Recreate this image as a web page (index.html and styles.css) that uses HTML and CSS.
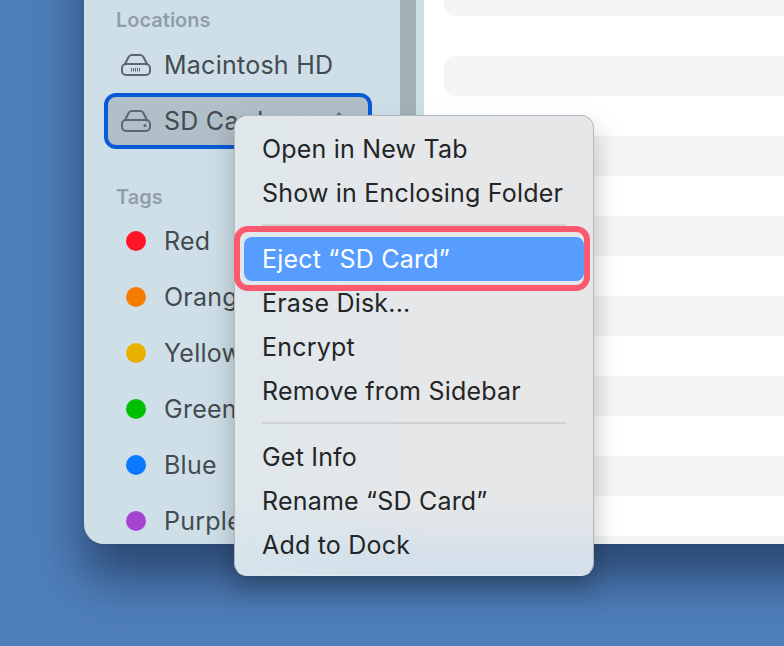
FILE: index.html
```html
<!DOCTYPE html>
<html lang="en">
<head>
    <meta charset="UTF-8">
    <title>Eject SD Card</title>
    <link rel="stylesheet" href="styles.css">
</head>
<body>

<div class="window-shadow"></div>
<div class="window">
    <aside class="sidebar">
        <div class="sidebar-list">
            <h2 class="sidebar-title">Locations</h2>
            <div class="row">
                <svg class="drive" viewBox="0 0 30 22" width="30" height="22">
                    <path d="M3.5 11 L7.6 3 Q8.6 1 11 1 H19 Q21.4 1 22.4 3 L26.5 11"/>
                    <rect x="1" y="10" width="28" height="11" rx="4"/>
                    <path class="grille" d="M10.5 14v3.5M12.5 14v3.5M14.5 14v3.5M16.5 14v3.5M18.5 14v3.5"/>
                </svg>
                <span>Macintosh HD</span>
            </div>
            <div class="row selected">
                <svg class="drive" viewBox="0 0 30 22" width="30" height="22">
                    <path d="M3.5 11 L7.6 3 Q8.6 1 11 1 H19 Q21.4 1 22.4 3 L26.5 11"/>
                    <rect x="1" y="10" width="28" height="11" rx="4"/>
                    <circle class="led" cx="24" cy="15.5" r="1.6"/>
                </svg>
                <span>SD Card</span>
                <svg class="eject" viewBox="0 0 14 16" width="14" height="16">
                    <path d="M7 0 L13 6 H1 Z"/>
                    <rect x="1" y="8" width="12" height="3"/>
                </svg>
            </div>
            <h2 class="sidebar-title tags-title">Tags</h2>
            <div class="row"><i class="dot dot-red"></i><span>Red</span></div>
            <div class="row"><i class="dot dot-orange"></i><span>Orange</span></div>
            <div class="row"><i class="dot dot-yellow"></i><span>Yellow</span></div>
            <div class="row"><i class="dot dot-green"></i><span>Green</span></div>
            <div class="row"><i class="dot dot-blue"></i><span>Blue</span></div>
            <div class="row"><i class="dot dot-purple"></i><span>Purple</span></div>
        </div>
        <div class="scrollbar"></div>
    </aside>
    <main class="content">
        <div class="stripe"></div>
        <div class="stripe"></div>
        <div class="stripe"></div>
        <div class="stripe"></div>
        <div class="stripe"></div>
        <div class="stripe"></div>
        <div class="stripe"></div>
        <div class="stripe"></div>
    </main>
</div>

<div class="menu-shadow"></div>
<div class="menu">
    <div class="menu-item">Open in New Tab</div>
    <div class="menu-item">Show in Enclosing Folder</div>
    <hr class="menu-sep">
    <div class="menu-item active">Eject “SD Card”</div>
    <div class="menu-item">Erase Disk...</div>
    <div class="menu-item">Encrypt</div>
    <div class="menu-item">Remove from Sidebar</div>
    <hr class="menu-sep">
    <div class="menu-item">Get Info</div>
    <div class="menu-item">Rename “SD Card”</div>
    <div class="menu-item">Add to Dock</div>
</div>

</body>
</html>
```

FILE: styles.css
```css
* {
    margin: 0;
    padding: 0;
    box-sizing: border-box;
}

body {
    position: relative;
    width: 784px;
    height: 646px;
    overflow: hidden;
    background: #4f7fba;
    font-family: Inter, "Liberation Sans", sans-serif;
}

/* shadows: a flat colour masked by a horizontal and a vertical falloff */
.window-shadow {
    position: absolute;
    left: 24px;
    top: 0;
    width: 760px;
    height: 636px;
    background: rgba(15, 30, 60, 0.6);
    -webkit-mask-image:
        linear-gradient(to right, rgba(0, 0, 0, 0) 0, rgba(0, 0, 0, 0.05) 24px, rgba(0, 0, 0, 0.3) 48px, rgba(0, 0, 0, 0.5) 60px, rgba(0, 0, 0, 0.7) 72px, rgba(0, 0, 0, 0.95) 96px, #000 120px),
        linear-gradient(to top, rgba(0, 0, 0, 0) 0, rgba(0, 0, 0, 0.05) 24px, rgba(0, 0, 0, 0.3) 48px, rgba(0, 0, 0, 0.5) 60px, rgba(0, 0, 0, 0.7) 72px, rgba(0, 0, 0, 0.95) 96px, #000 120px);
    -webkit-mask-composite: source-in;
    mask-composite: intersect;
}

.window {
    position: relative;
    display: flex;
    height: 544px;
    margin-left: 84px;
    border-bottom-left-radius: 20px;
}

.sidebar {
    display: flex;
    flex: 0 0 340px;
    padding: 0 8px 0 20px;
    background: #cfdfe8;
    border-bottom-left-radius: 20px;
    overflow: hidden;
}

.sidebar-list {
    flex: 1;
}

.scrollbar {
    flex: 0 0 16px;
    background: #a3b0b8;
}

.sidebar-title {
    height: 37px;
    padding: 7px 0 0 12px;
    font-size: 20px;
    font-weight: 600;
    line-height: 26px;
    color: #8f9fa9;
}

.tags-title {
    height: 64px;
    padding-top: 35px;
}

.row {
    display: flex;
    align-items: center;
    width: 268px;
    height: 56px;
    padding-left: 13px;
    gap: 13px;
    border: 4px solid transparent;
    border-radius: 12px;
    font-size: 25px;
    letter-spacing: 0.25px;
    color: #444b50;
    white-space: nowrap;
}

.row.selected {
    background: #b1bfc9;
    border-color: #0a5ad8;
}

.drive {
    flex: none;
    fill: none;
    stroke: #5f676d;
    stroke-width: 2;
}

.drive .grille {
    stroke-width: 1;
}

.drive .led {
    fill: #5f676d;
    stroke: none;
}

.eject {
    margin: -2px 22px 0 auto;
    fill: #6d777e;
}

.dot {
    flex: none;
    width: 20px;
    height: 20px;
    margin: 0 5px;
    border-radius: 50%;
}

.dot-red { background: #ff1526; }
.dot-orange { background: #f57c00; }
.dot-yellow { background: #eab000; }
.dot-green { background: #00bf00; }
.dot-blue { background: #0a78ff; }
.dot-purple { background: #a544d0; }

.content {
    flex: 1;
    min-width: 0;
    padding-left: 20px;
    background: #fff;
    overflow: hidden;
}

.stripe {
    height: 40px;
    margin-bottom: 40px;
    background: #f4f5f5;
    border-radius: 10px 0 0 10px;
}

.stripe:first-child {
    margin-top: -24px;
}

.menu-shadow {
    position: absolute;
    left: 204px;
    top: 100px;
    width: 420px;
    height: 520px;
    background: rgba(0, 0, 0, 0.25);
    -webkit-mask-image:
        linear-gradient(to right, rgba(0, 0, 0, 0) 0, rgba(0, 0, 0, 0.05) 12px, rgba(0, 0, 0, 0.3) 24px, rgba(0, 0, 0, 0.5) 30px, rgba(0, 0, 0, 0.7) 36px, rgba(0, 0, 0, 0.95) 48px, #000 60px, #000 360px, rgba(0, 0, 0, 0.95) 372px, rgba(0, 0, 0, 0.7) 384px, rgba(0, 0, 0, 0.5) 390px, rgba(0, 0, 0, 0.3) 396px, rgba(0, 0, 0, 0.05) 408px, rgba(0, 0, 0, 0) 420px),
        linear-gradient(to bottom, rgba(0, 0, 0, 0) 0, rgba(0, 0, 0, 0.05) 12px, rgba(0, 0, 0, 0.3) 24px, rgba(0, 0, 0, 0.5) 30px, rgba(0, 0, 0, 0.7) 36px, rgba(0, 0, 0, 0.95) 48px, #000 60px, #000 460px, rgba(0, 0, 0, 0.95) 472px, rgba(0, 0, 0, 0.7) 484px, rgba(0, 0, 0, 0.5) 490px, rgba(0, 0, 0, 0.3) 496px, rgba(0, 0, 0, 0.05) 508px, rgba(0, 0, 0, 0) 520px);
    -webkit-mask-composite: source-in;
    mask-composite: intersect;
}

.menu {
    position: absolute;
    left: 234px;
    top: 115px;
    width: 360px;
    height: 461px;
    padding: 11px 9px 0;
    background:
        linear-gradient(to right, rgba(216, 232, 238, 0.55), rgba(216, 232, 238, 0) 52%),
        linear-gradient(to bottom, #e6e7e9 0, #e6e7e9 84%, #d4e0ea 97%);
    border: 1px solid rgba(100, 105, 110, 0.35);
    border-bottom-color: transparent;
    border-radius: 13px;
}

.menu-item {
    position: relative;
    height: 44px;
    padding-left: 18px;
    font-size: 25px;
    letter-spacing: 0.2px;
    line-height: 44px;
    color: #232527;
    white-space: nowrap;
}

.menu-item.active {
    color: #fff;
    background: #569dff;
    border-radius: 8px;
}

/* the red ring is an annotation on the screenshot */
.menu-item.active::after {
    content: "";
    position: absolute;
    left: -10px;
    right: -6px;
    top: -11px;
    bottom: -10px;
    border: 6px solid #fb5a6e;
    border-radius: 14px;
}

.menu-sep {
    height: 2px;
    margin: 9px 18px 11px;
    border: none;
    background: #d0d1d3;
}
```
